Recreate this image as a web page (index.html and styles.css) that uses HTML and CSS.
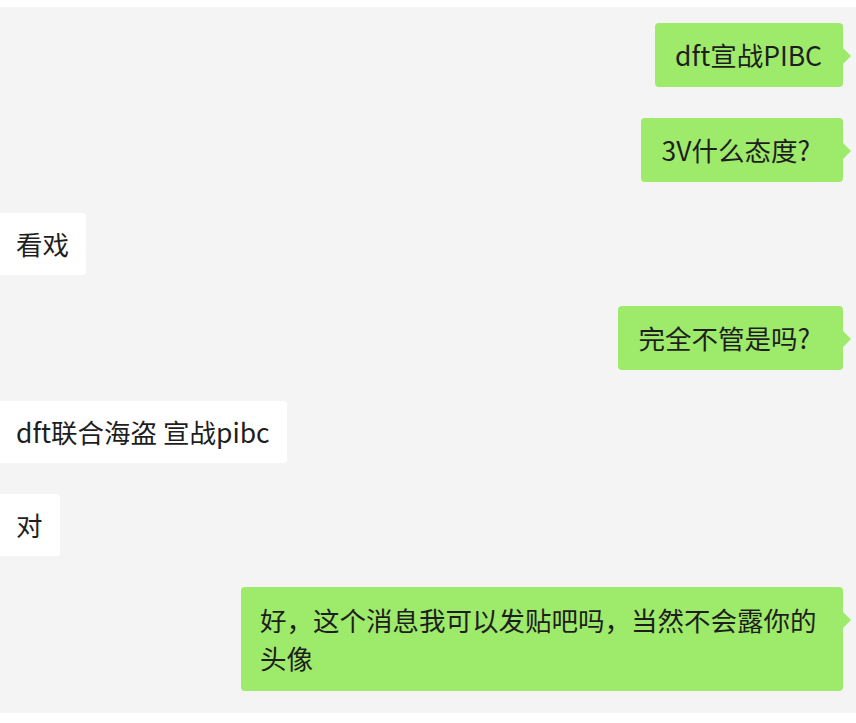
FILE: index.html
```html
<!DOCTYPE html>
<html lang="zh-CN">
<head>
<meta charset="utf-8">
<link rel="stylesheet" href="styles.css">
</head>
<body>
<div class="chat">
  <div class="row row-right"><div class="bubble mine">dft宣战PIBC</div></div>
  <div class="row row-right"><div class="bubble mine trail">3V什么态度?</div></div>
  <div class="row row-left"><div class="bubble theirs">看戏</div></div>
  <div class="row row-right"><div class="bubble mine trail">完全不管是吗?</div></div>
  <div class="row row-left"><div class="bubble theirs">dft联合海盗 宣战pibc</div></div>
  <div class="row row-left"><div class="bubble theirs">对</div></div>
  <div class="row row-right"><div class="bubble mine long">好，这个消息我可以发贴吧吗，当然不会露你的头像</div></div>
</div>
</body>
</html>
```
FILE: styles.css
```css
html, body {
  margin: 0;
  padding: 0;
  background: #ffffff;
}
body {
  width: 856px;
  height: 723px;
  overflow: hidden;
  font-family: "Noto Sans CJK SC", "Noto Sans", sans-serif;
}
.chat {
  margin-top: 7px;
  height: 706px;
  box-sizing: border-box;
  background: #f4f4f4;
  padding-top: 16px;
  display: flex;
  flex-direction: column;
  gap: 31px;
}
.row {
  display: flex;
}
.row-right {
  justify-content: flex-end;
  padding-right: 13px;
}
.row-left {
  justify-content: flex-start;
}
.bubble {
  position: relative;
  font-size: 26.5px;
  line-height: 38px;
  color: #1e1e1e;
  border-radius: 4px;
}
.mine {
  background: #9eea6a;
  padding: 13px 21px 13px 20px;
}
.trail {
  padding-right: 33px;
}
.mine::after {
  content: "";
  position: absolute;
  right: -8px;
  top: 25px;
  border-style: solid;
  border-width: 8px 0 8px 8px;
  border-color: transparent transparent transparent #9eea6a;
}
.theirs {
  background: #ffffff;
  padding: 12px 17px 12px 16px;
  border-radius: 0 4px 4px 0;
}
.long {
  width: 562px;
  padding: 14px 21px 14px 19px;
}
```
